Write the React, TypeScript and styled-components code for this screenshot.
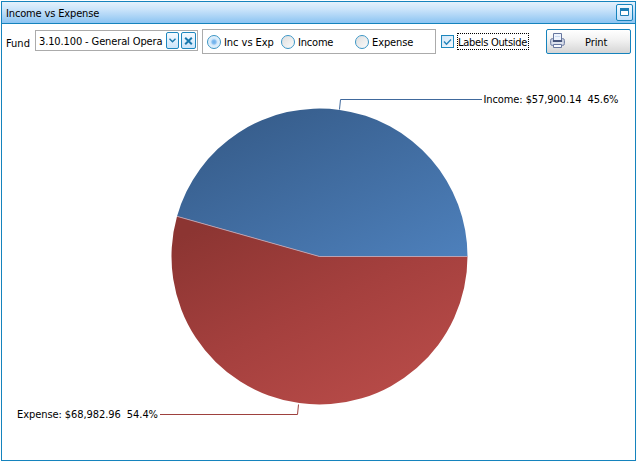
import React, { useState } from "react";
import styled, { createGlobalStyle } from "styled-components";

const Global = createGlobalStyle`
  * { box-sizing: border-box; }
  body { margin: 0; background: #fdfdfd; }
  button { padding: 0; margin: 0; font: inherit; color: inherit; }
`;

const Panel = styled.section`
  width: 635px;
  height: 460px;
  margin: 1px 0 0 1px;
  border: 1px solid #1583bd;
  background: #fff;
  display: flex;
  flex-direction: column;
  font: 11px "DejaVu Sans Condensed", "DejaVu Sans", sans-serif;
  font-stretch: condensed;
  color: #000;
`;

const TitleBar = styled.header`
  height: 22px;
  flex: none;
  display: flex;
  align-items: center;
  justify-content: space-between;
  padding: 0 2px 0 4px;
  border-bottom: 1px solid #1583bd;
  background: linear-gradient(#e4f1fc 0%, #cbe4fa 35%, #8cc4f2 100%);
`;

const Caption = styled.span<{ $spacing?: number }>`
  line-height: 15px;
  white-space: pre;
  letter-spacing: ${(p) => p.$spacing ?? -0.3}px;
`;

const TitleText = styled(Caption)`
  padding-top: 1px;
`;

const MaximizeButton = styled.button`
  width: 17px;
  height: 17px;
  border: 1px solid #1583bd;
  border-radius: 2px;
  background: linear-gradient(#f4faff, #c5e2fa);
  display: flex;
  align-items: center;
  justify-content: center;
`;

const Toolbar = styled.div`
  height: 34px;
  flex: none;
  display: flex;
  align-items: flex-start;
  padding: 5px 4px 0 4px;
`;

const FundLabel = styled.label`
  width: 29px;
  padding-top: 7px;
  line-height: 15px;
`;

const Combo = styled.div`
  width: 163px;
  height: 21px;
  margin: 1px 4px 0 0;
  padding: 0 1px 0 3px;
  border: 1px solid #ababab;
  display: flex;
  align-items: center;
`;

const ComboValue = styled.div`
  width: 127px;
  padding-top: 1px;
  overflow: hidden;
  white-space: nowrap;
`;

const ComboButton = styled.button<{ $width: number }>`
  width: ${(p) => p.$width}px;
  height: 17px;
  flex: none;
  border: 1px solid #1d87be;
  border-radius: 2px;
  background: linear-gradient(#f5faff, #cce5fa);
  display: flex;
  align-items: center;
  justify-content: center;

  & + & { margin-left: 2px; }
`;

const RadioGroup = styled.div`
  width: 234px;
  height: 25px;
  margin-right: 5px;
  padding: 0 0 0 4px;
  border: 1px solid #ababab;
  display: grid;
  grid-template-columns: 74px 74px 74px;
  align-items: center;
`;

const RadioItem = styled.div`
  display: flex;
  align-items: center;
  gap: 3px;
  height: 23px;
`;

const RadioText = styled(Caption)`
  padding-top: 2px;
`;

const RadioDial = styled.span<{ $on: boolean }>`
  width: 14px;
  height: 14px;
  flex: none;
  border: 1px solid #3a94c4;
  border-radius: 50%;
  background: ${(p) =>
    p.$on
      ? "radial-gradient(circle, #6aaeea 0, #84bdf0 2px, #d0e7fa 3.2px, #e6f3fd 6px)"
      : "linear-gradient(135deg, #dedede, #fbfbfb) padding-box"};
`;

const CheckOption = styled.div`
  display: flex;
  align-items: center;
  height: 25px;
  gap: 3px;
`;

const CheckBox = styled.span`
  width: 13px;
  height: 13px;
  flex: none;
  border: 1px solid #1d87be;
  background: linear-gradient(135deg, #cfe6f8, #f7fbff);
  display: flex;
  align-items: center;
  justify-content: center;
`;

const FocusLabel = styled.span`
  width: 72px;
  height: 17px;
  border: 1px dotted #000;
  line-height: 15px;
  padding-top: 1px;
  white-space: nowrap;
`;

const PrintButton = styled.button`
  width: 85px;
  height: 25px;
  margin-left: auto;
  padding-left: 3px;
  border: 1px solid #1583bd;
  border-radius: 2px;
  background: linear-gradient(#ffffff 0%, #f1f1f1 45%, #d5d5d5 100%);
  display: flex;
  align-items: center;
  gap: 19px;

  svg { margin-top: -1px; }
`;

const PrintText = styled(Caption)`
  padding-top: 2px;
`;

const Chart = styled.svg`
  display: block;
  width: 633px;
  height: 402px;
  flex: none;
  font-size: 11px;
`;

const CX = 317.5;
const CY = 198.5;
const R = 148;
const incomeAngle = 0.4563 * 2 * Math.PI;
const EX = CX + R * Math.cos(incomeAngle);
const EY = CY - R * Math.sin(incomeAngle);

const PieChart = () => (
  <Chart viewBox="0 0 633 402">
    <defs>
      <linearGradient id="incomeFill" gradientUnits="userSpaceOnUse" x1="228" y1="78" x2="330" y2="291">
        <stop offset="0" stopColor="#385f8e" />
        <stop offset="1" stopColor="#5084c1" />
      </linearGradient>
      <linearGradient id="expenseFill" gradientUnits="userSpaceOnUse" x1="205" y1="166" x2="316" y2="391">
        <stop offset="0" stopColor="#8c3532" />
        <stop offset="0.5" stopColor="#a5403e" />
        <stop offset="1" stopColor="#b94c49" />
      </linearGradient>
    </defs>
    <path d={`M${CX} ${CY}H${CX + R}A${R} ${R} 0 0 0 ${EX} ${EY}Z`} fill="url(#incomeFill)" />
    <path d={`M${CX} ${CY}L${EX} ${EY}A${R} ${R} 0 1 0 ${CX + R} ${CY}Z`} fill="url(#expenseFill)" />
    <path d={`M${EX} ${EY}L${CX} ${CY}H${CX + R}`} fill="none" stroke="#bda7b8" strokeWidth="0.9" />
    <path d="M337.5 51.5L338.5 41.5H480" fill="none" stroke="#40699c" />
    <path d="M296.5 346.5L295.5 356.5H158" fill="none" stroke="#9e413e" />
    <text x="481.5" y="45" textLength="135">Income: $57,900.14&#160; 45.6%</text>
    <text x="15" y="360" textLength="141">Expense: $68,982.96&#160; 54.4%</text>
  </Chart>
);

const PrinterIcon = () => (
  <svg width="16" height="16" viewBox="0 0 16 16">
    <path d="M.5 7.5Q.5 5.5 2.5 5.5H12.5Q14.5 5.5 14.5 7.5V10.5Q14.5 12.5 12.5 12.5H2.5Q.5 12.5 .5 10.5Z" fill="#c3cbdd" stroke="#7785a8" />
    <path d="M3.5 8.5V.5H11.5V8.5Z" fill="#edf3fd" stroke="#66769f" />
    <path d="M5 3.5H10" stroke="#cbd9f0" />
    <path d="M3 8H12" stroke="#46547a" strokeWidth="2" />
    <path d="M2 10H13" stroke="#f5f7fc" />
    <path d="M3.5 11.5H11.5V14.5H3.5Z" fill="#f8faff" stroke="#67779f" />
  </svg>
);

const modes = [
  { name: "Inc vs Exp", spacing: -0.05 },
  { name: "Income", spacing: -0.2 },
  { name: "Expense", spacing: -0.1 },
];

export default function App() {
  const [mode, setMode] = useState("Inc vs Exp");
  return (
    <>
      <Global />
      <Panel>
        <TitleBar>
          <TitleText $spacing={-0.15}>Income vs Expense</TitleText>
          <MaximizeButton aria-label="Maximize">
            <svg width="9" height="9" viewBox="0 0 9 9">
              <path d="M.5 1V7.5H8.5V1" fill="#fff" stroke="#1b7db5" />
              <path d="M0 1.5H9" stroke="#1b7db5" strokeWidth="3" />
            </svg>
          </MaximizeButton>
        </TitleBar>
        <Toolbar>
          <FundLabel><Caption $spacing={0}>Fund</Caption></FundLabel>
          <Combo>
            <ComboValue><Caption $spacing={-0.12}>3.10.100 - General Opera</Caption></ComboValue>
            <ComboButton $width={13} aria-label="Open list">
              <svg width="7" height="5" viewBox="0 0 7 5">
                <path d="M.5 .8L3.5 3.8L6.5 .8" fill="none" stroke="#1878ad" strokeWidth="1.4" />
              </svg>
            </ComboButton>
            <ComboButton $width={15} aria-label="Clear">
              <svg width="9" height="8" viewBox="0 0 9 8">
                <path d="M1.2.7L7.8 7.3M7.8.7L1.2 7.3" stroke="#1878ad" strokeWidth="2" />
              </svg>
            </ComboButton>
          </Combo>
          <RadioGroup role="radiogroup">
            {modes.map((m) => (
              <RadioItem key={m.name} role="radio" aria-checked={mode === m.name} onClick={() => setMode(m.name)}>
                <RadioDial $on={mode === m.name} />
                <RadioText $spacing={m.spacing}>{m.name}</RadioText>
              </RadioItem>
            ))}
          </RadioGroup>
          <CheckOption>
            <CheckBox>
              <svg width="9" height="8" viewBox="0 0 9 8">
                <path d="M1 3.5L3.5 6.2L8 1.5" fill="none" stroke="#2584bb" strokeWidth="1.4" />
              </svg>
            </CheckBox>
            <FocusLabel><Caption>Labels Outside</Caption></FocusLabel>
          </CheckOption>
          <PrintButton>
            <PrinterIcon />
            <PrintText $spacing={-0.1}>Print</PrintText>
          </PrintButton>
        </Toolbar>
        <PieChart />
      </Panel>
    </>
  );
}
